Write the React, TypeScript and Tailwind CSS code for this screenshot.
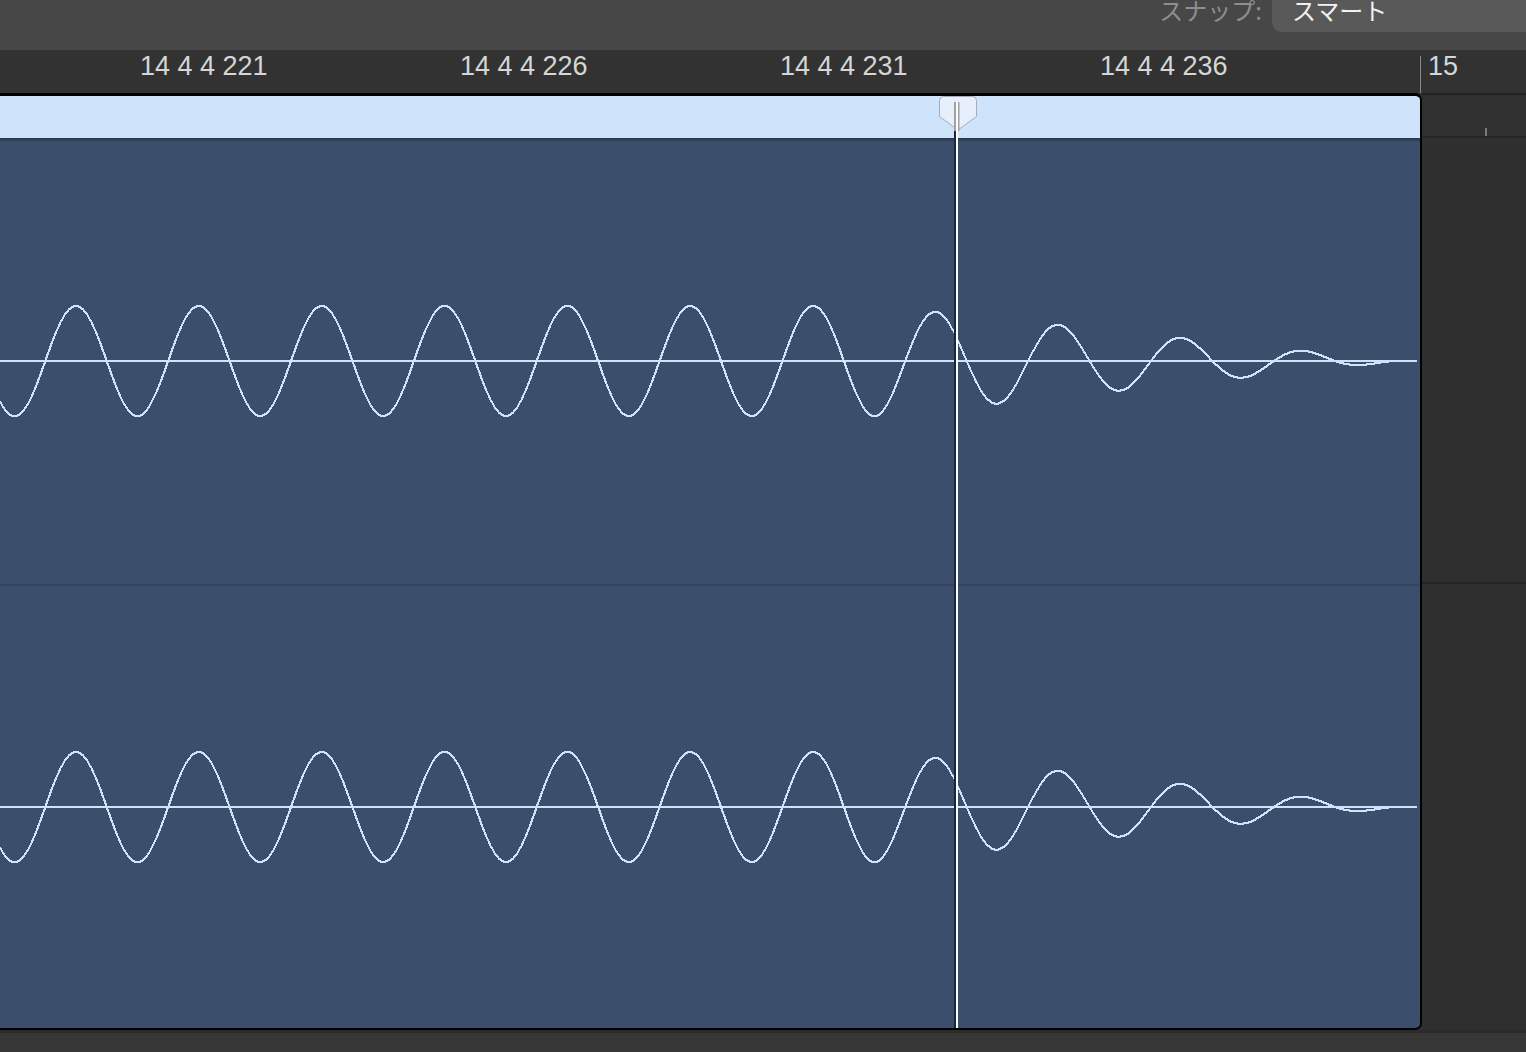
import React from "react";

const PERIOD = (936 - 76) / 7;
const X0 = 76 - PERIOD / 4;

function wavePoints(baseline: number): string {
  const pts: string[] = [];
  for (let x = 0; x <= 1390; x++) {
    const A = x < 880 ? 55 : 55 * Math.max(0, 1 - (x - 880) / 520);
    const y = Math.round(baseline - A * Math.sin((2 * Math.PI * (x - X0)) / PERIOD));
    pts.push(`${x},${y}`);
  }
  return pts.join(" ");
}

function Wave({ height, baseline }: { height: number; baseline: number }) {
  return (
    <svg width={1420} height={height} className="block">
      <line x1={0} y1={baseline} x2={1417} y2={baseline} stroke="#cfe3fb" strokeWidth={2} shapeRendering="crispEdges" />
      <polyline points={wavePoints(baseline)} fill="none" stroke="#cfe3fb" strokeWidth={2} strokeLinejoin="miter" shapeRendering="crispEdges" />
    </svg>
  );
}

const rulerLabels = ["14 4 4 221", "14 4 4 226", "14 4 4 231", "14 4 4 236"];

export default function App() {
  return (
    <div className="w-[1526px] h-[1052px] flex flex-col bg-[#2f2f2f] overflow-hidden" style={{ fontFamily: '"Liberation Sans", Arial, sans-serif' }}>
      {/* top bar */}
      <div className="h-[50px] bg-[#474747] flex justify-end items-start shrink-0">
        <span
          className="-mt-[2px] mr-[10px] text-[24px] leading-[24px] text-[#8e8e8e]"
          style={{ fontFamily: '"Noto Sans CJK JP", "Noto Sans", sans-serif' }}
        >
          スナップ:
        </span>
        <div className="w-[254px] h-[32px] bg-[#595959] rounded-bl-[10px] pl-[20px] flex flex-col">
          <span
            className="-mt-[2px] text-[24px] leading-[24px] text-[#f2f2f2]"
            style={{ fontFamily: '"Noto Sans CJK JP", "Noto Sans", sans-serif' }}
          >
            スマート
          </span>
        </div>
      </div>

      {/* ruler */}
      <div className="h-[43px] bg-[#323232] flex items-start pl-[140px] shrink-0 text-[27px] leading-[27px] text-[#d6d6d6]">
        {rulerLabels.map((l) => (
          <div key={l} className="w-[320px] pt-[3px] whitespace-nowrap">
            {l}
          </div>
        ))}
        <div className="self-end w-px h-[37px] bg-[#8a8a8a]" />
        <div className="pt-[3px] ml-[7px]">15</div>
      </div>

      {/* main */}
      <div className="flex h-[937px] shrink-0">
        {/* region */}
        <div className="relative w-[1422px] shrink-0 border-t-[3px] border-r-2 border-b-2 border-black rounded-tr-[7px] rounded-br-[7px] overflow-hidden flex flex-col">
          <div className="h-[42px] bg-[#cfe3fb] shrink-0" />
          <div className="flex-1 bg-[#3b4f6c] flex flex-col relative">
            <div className="absolute left-0 right-0 top-0 h-[4px] bg-gradient-to-b from-[#22303f] to-transparent opacity-80" />
            <div className="h-[448px] border-b-2 border-[#33455d] shrink-0">
              <Wave height={446} baseline={223} />
            </div>
            <div className="flex-1">
              <Wave height={440} baseline={221} />
            </div>
          </div>

          {/* playhead */}
          <div className="absolute left-[954px] top-[33px] bottom-0 w-[2px] bg-[#1c2636]" />
          <div className="absolute left-[956px] top-[6px] bottom-0 w-[2px] bg-white" />
          <svg className="absolute left-[939px] top-0" width={38} height={35} viewBox="0 0 38 35">
            <path
              d="M4.5 0.5 H33.5 Q37.5 0.5 37.5 4.5 V20.5 L19.6 33.6 Q19 34 18.4 33.6 L0.5 20.5 V4.5 Q0.5 0.5 4.5 0.5 Z"
              fill="#e6effb"
              stroke="#a3acb8"
              strokeWidth={1}
            />
            <rect x={15} y={6} width={2} height={29} fill="#a0a0a4" />
            <rect x={17} y={6} width={2} height={29} fill="#ffffff" />
            <rect x={19} y={6} width={1.5} height={29} fill="#a0a0a4" />
          </svg>
        </div>

        {/* right panel */}
        <div className="flex-1 flex flex-col border-t-2 border-[#232323] bg-[#2f2f2f]">
          <div className="h-[43px] bg-[#303030] border-b-2 border-[#262626] relative shrink-0">
            <div className="absolute left-[63px] top-[33px] w-[2px] h-[8px] bg-[#7a7a7a]" />
          </div>
          <div className="h-[446px] border-b-2 border-[#232323] shrink-0" />
          <div className="flex-1" />
        </div>
      </div>

      {/* bottom */}
      <div className="flex-1 bg-[#373737] border-t-[3px] border-[#2b2b2b]" />
    </div>
  );
}
